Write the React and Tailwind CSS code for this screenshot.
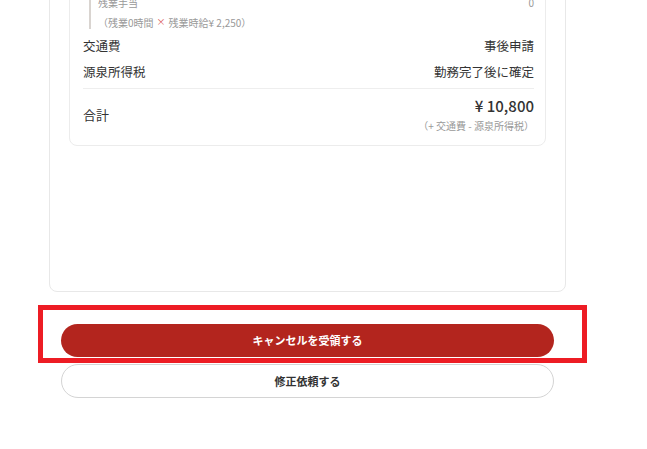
const JP = { fontFamily: '"Noto Sans CJK JP", "Noto Sans", sans-serif' }

function Row({ label, value }) {
  return (
    <div className="flex items-center justify-between h-5 text-[12.5px] text-[#333]">
      <span>{label}</span>
      <span>{value}</span>
    </div>
  )
}

export default function App() {
  return (
    <div className="w-[647px] h-[449px] overflow-hidden bg-white" style={JP}>
      <div className="ml-[49px] w-[517px]">
        <div className="-mt-[40px] border border-[#e8e8e8] rounded-lg px-[19px] pt-[19px] pb-[145px]">
          <div className="border border-[#ececec] rounded-lg pl-[13px] pr-[11px] pt-[14px] pb-3">
            <div className="ml-[6px] border-l-2 border-[#d9d4d0] pl-[7px]">
              <div className="flex items-center justify-between h-[14px] text-[10px] text-[#999]">
                <span>残業手当</span>
                <span>0</span>
              </div>
              <div className="mt-[6px] h-[14px] flex items-center text-[10px] text-[#999]">
                （残業0時間<span className="mx-[3px] text-[9px] text-[#d9534f]">×</span>残業時給¥ 2,250）
              </div>
            </div>
            <div className="mt-[7px]">
              <Row label="交通費" value="事後申請" />
            </div>
            <div className="mt-[6px]">
              <Row label="源泉所得税" value="勤務完了後に確定" />
            </div>
            <div className="mt-[6px] border-t border-[#eeeeee]" />
            <div className="pt-[7px] flex items-center justify-between">
              <span className="text-[13px] text-[#333]">合計</span>
              <div className="flex flex-col items-end">
                <span className="h-5 leading-5 text-[15px] font-medium text-[#333]">¥ 10,800</span>
                <span className="mt-[3px] h-[14px] leading-[14px] text-[10px] text-[#999]">（+ 交通費 - 源泉所得税）</span>
              </div>
            </div>
          </div>
        </div>

        <div className="px-3 mt-[32px] flex flex-col gap-[7px]">
          <div className="relative">
            <div className="absolute -left-[23px] -right-[33px] -top-[19px] -bottom-[6px] border-[5px] border-[#ed1c24]" />
            <button className="relative w-full h-[33px] rounded-full bg-[#b3251e] text-white text-[11px] font-bold">
              キャンセルを受領する
            </button>
          </div>
          <button className="w-full h-[34px] rounded-full border border-[#d4d4d4] bg-white text-[#333] text-[11px] font-bold">
            修正依頼する
          </button>
        </div>
      </div>
    </div>
  )
}
